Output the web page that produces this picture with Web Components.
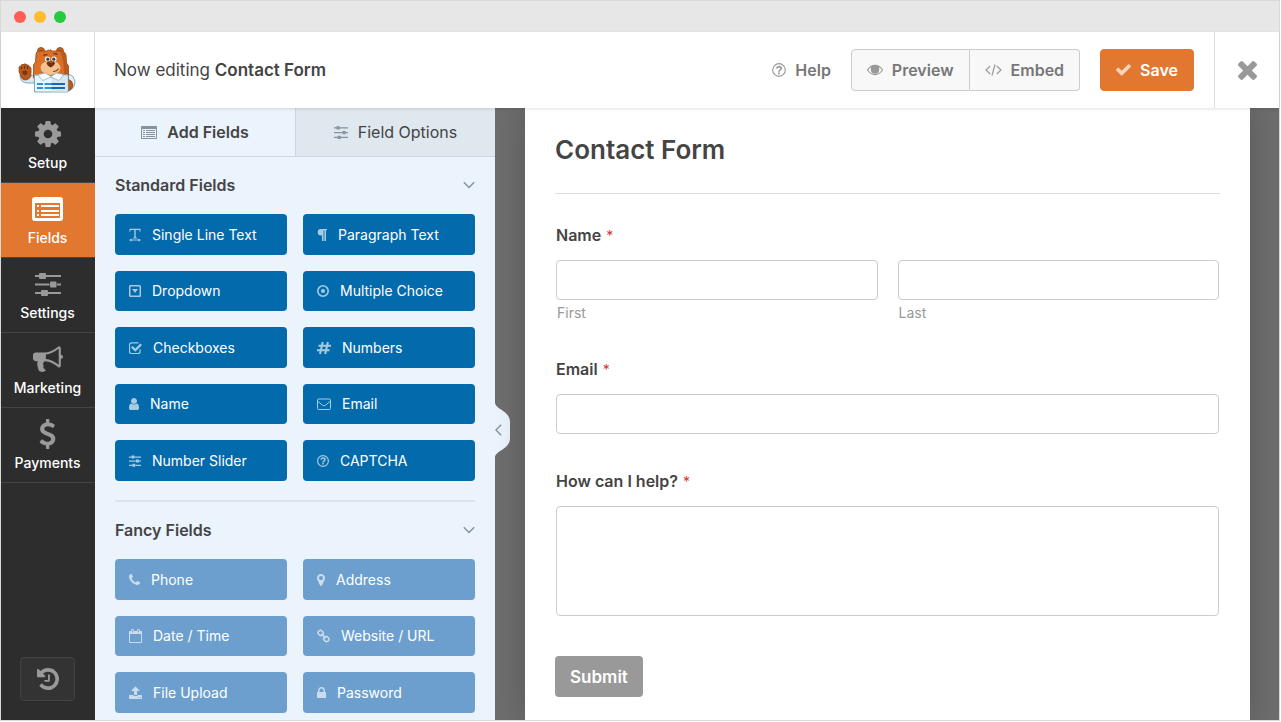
<!DOCTYPE html>
<html lang="en">
<head>
<meta charset="utf-8">
<title>Form Builder</title>
<style>
body {
  margin: 0 1px 1px 0;
  background: #ffffff;
  color: #444444;
  font-family: Inter, "Liberation Sans", sans-serif;
  font-size: 14px;
}
</style>
</head>
<body>
<builder-window>
  <builder-header slot="header" form-name="Contact Form"></builder-header>
  <side-nav slot="nav">
    <nav-item icon="cog">Setup</nav-item>
    <nav-item icon="form" active>Fields</nav-item>
    <nav-item icon="sliders-lg">Settings</nav-item>
    <nav-item icon="bullhorn">Marketing</nav-item>
    <nav-item icon="dollar">Payments</nav-item>
  </side-nav>
  <field-panel slot="panel">
    <field-group heading="Standard Fields">
      <field-button icon="text">Single Line Text</field-button>
      <field-button icon="paragraph">Paragraph Text</field-button>
      <field-button icon="dropdown">Dropdown</field-button>
      <field-button icon="radio">Multiple Choice</field-button>
      <field-button icon="checkbox">Checkboxes</field-button>
      <field-button icon="hash">Numbers</field-button>
      <field-button icon="user">Name</field-button>
      <field-button icon="envelope">Email</field-button>
      <field-button icon="sliders">Number Slider</field-button>
      <field-button icon="question">CAPTCHA</field-button>
    </field-group>
    <field-group heading="Fancy Fields">
      <field-button icon="phone" locked>Phone</field-button>
      <field-button icon="marker" locked>Address</field-button>
      <field-button icon="calendar" locked>Date / Time</field-button>
      <field-button icon="link" locked>Website / URL</field-button>
      <field-button icon="upload" locked>File Upload</field-button>
      <field-button icon="lock" locked>Password</field-button>
    </field-group>
  </field-panel>
  <form-preview heading="Contact Form">
    <form-field label="Name" type="name"></form-field>
    <form-field label="Email" type="email"></form-field>
    <form-field label="How can I help?" type="textarea"></form-field>
  </form-preview>
</builder-window>

<script>
// name: [width, height, viewBox, markup]
const icons = {
  cog: [26, 26, '128 128 1536 1536', '<path d="M1152 896q0-106-75-181t-181-75-181 75-75 181 75 181 181 75 181-75 75-181zm512-109v222q0 12-8 23t-20 13l-185 28q-19 54-39 91 35 50 107 138 10 12 10 25t-9 23q-27 37-99 108t-94 71q-12 0-26-9l-138-108q-44 23-91 38-16 136-29 186-7 28-36 28h-222q-14 0-24.5-8.5t-11.5-21.5l-28-184q-49-16-90-37l-141 107q-10 9-25 9-14 0-25-11-126-114-165-168-7-10-7-23 0-12 8-23 15-21 51-66.5t54-70.5q-27-50-41-99l-183-27q-13-2-21-12.5t-8-23.5v-222q0-12 8-23t19-13l186-28q14-46 39-92-40-57-107-138-10-12-10-24 0-10 9-23 26-36 98.5-107.5t94.5-71.5q13 0 26 10l138 107q44-23 91-38 16-136 29-186 7-28 36-28h222q14 0 24.5 8.5t11.5 21.5l28 184q49 16 90 37l142-107q9-9 24-9 13 0 25 10 129 119 165 170 7 8 7 22 0 12-8 23-15 21-51 66.5t-54 70.5q26 50 41 98l183 28q13 2 21 12.5t8 23.5z"/>'],
  form: [31, 24, '0 0 31 24', '<path fill-rule="evenodd" d="M3 0h25a3 3 0 0 1 3 3v18a3 3 0 0 1-3 3H3a3 3 0 0 1-3-3V3a3 3 0 0 1 3-3zM3 6v14a1 1 0 0 0 1 1h23a1 1 0 0 0 1-1V6z"/><path d="M5 8h2v2H5zM5 13h2v2H5zM5 17h2v2H5zM9 8h18v2H9zM9 13h18v2H9zM9 17h18v2H9z"/>'],
  'form-sm': [16, 13, '0 0 16 13', '<path fill-rule="evenodd" d="M1 0h14a1 1 0 0 1 1 1v11a1 1 0 0 1-1 1H1a1 1 0 0 1-1-1V1a1 1 0 0 1 1-1zM1 3v9h14V3z"/><path d="M2 4h2v1H2zM2 6h2v1H2zM2 8h2v1H2zM2 10h2v1H2zM5 4h9v1H5zM5 6h9v1H5zM5 8h9v1H5zM5 10h9v1H5z"/>'],
  'sliders-lg': [26, 24, '0 0 26 24', '<path d="M0 3h4v2H0zM11 3h15v2H11zM0 11.5h14.5v2H0zM22 11.5h4v2h-4zM0 20h6v2H0zM13 20h13v2H13z"/><rect x="4" y="1" width="7" height="6" rx="1"/><rect x="15" y="9.5" width="6.500" height="6" rx="1"/><rect x="6" y="18" width="7" height="6" rx="1"/>'],
  'sliders-md': [14, 13, '0 0 14 13', '<path d="M0 1.300h3v1.200H0zM6 1.300h8v1.200H6zM0 6h8v1.200H0zM12 6h2v1.200h-2zM0 10.800h3.500v1.200H0zM7 10.800h7v1.200H7z"/><path d="M2.500.300h3.300v3.200H2.500zM8.400 5h3.300v3.200H8.400zM3.500 9.800h3.300V13H3.500z"/>'],
  sliders: [12, 14, '0 0 12 14', '<path d="M0 2.500h2.500v1.200H0zM5.500 2.500H12v1.200H5.500zM0 6.500h6.800v1.200H0zM10.200 6.500H12v1.200h-1.800zM0 10.700h3v1.200H0zM6.500 10.700H12v1.200H6.500z"/><path d="M2.500 1.600h3v3h-3zM7 5.600h3v3H7zM3.300 9.800h3v3h-3z"/>'],
  bullhorn: [30, 26, '0 128 1792 1536', '<path d="M1664 640q53 0 90.500 37.500t37.500 90.500-37.500 90.500-90.500 37.500v384q0 52-38 90t-90 38q-417-347-812-380-58 19-91 66t-31 100.500 40 92.500q-20 33-23 65.500t6 58 33.500 55 48 50 61.500 50.500q-29 58-111.500 83t-168.500 11.500-132-55.500q-7-23-29.500-87.500t-32-94.500-23-89-15-101 3.500-98.500 22-110.500h-122q-66 0-113-47t-47-113v-192q0-66 47-113t113-47h480q435 0 896-384 52 0 90 38t38 90v384zm-128 604v-954q-394 302-768 343v270q377 42 768 341z"/>'],
  dollar: [17, 30, '390 0 1010 1792', '<path d="M1362 1185q0 153-99.500 263.500t-258.500 136.500v175q0 14-9 23t-23 9h-135q-13 0-22.500-9.500t-9.500-22.500v-175q-66-9-127.500-31t-101.500-44.500-74-48-46.500-37.500-17.500-18q-17-21-2-41l103-135q7-10 23-12 15-2 24 9l2 2q113 99 243 125 37 8 74 8 81 0 142.500-43t61.500-122q0-28-15-53t-33.500-42-58.500-37.500-66-32-80-32.500q-39-16-61.500-25t-61.500-26.500-62.500-31-56.500-35.500-53.500-42.500-43.500-49-35.500-58-21-66.500-8.500-78q0-138 98-242t255-134v-180q0-13 9.500-22.500t22.500-9.500h135q14 0 23 9t9 23v176q57 6 110.500 23t87 33.500 63.500 37.500 39 29 15 14q17 18 5 38l-81 146q-8 15-23 16-14 3-27-7-3-3-14.500-12t-39-26.500-58.500-32-74.500-26-85.500-11.500q-95 0-155 43t-60 111q0 26 8.500 48t29.500 41.500 39.500 33 56 31 60.500 27 70 27.500q53 20 81 31.500t76 35 75.500 42.500 62 50 53 63.500 31.500 76.500 13 94z"/>'],
  history: [22, 22, '128 128 1536 1536', '<path d="M1664 896q0 156-61 298t-164 245-245 164-298 61q-172 0-327-72.500t-264-204.500q-7-10-6.500-22.500t8.500-20.500l137-138q10-9 25-9 16 2 23 12 73 95 179 147t225 52q104 0 198.500-40.500t163.500-109.500 109.500-163.500 40.500-198.500-40.500-198.500-109.500-163.500-163.500-109.500-198.500-40.500q-98 0-188 35.500t-160 101.500l137 138q31 30 14 69-17 40-59 40h-448q-26 0-45-19t-19-45v-448q0-42 40-59 39-17 69 14l130 129q107-101 244.500-156.500t284.500-55.500q156 0 298 61t245 164 164 245 61 298zm-640-288v448q0 14-9 23t-23 9h-320q-14 0-23-9t-9-23v-64q0-14 9-23t23-9h224v-352q0-14 9-23t23-9h64q14 0 23 9t9 23z"/>'],
  eye: [16, 12, '0 0 16 12', '<path fill-rule="evenodd" d="M8 .800c3.200 0 6 1.900 7.800 4.600a1.100 1.100 0 0 1 0 1.200C14 9.300 11.200 11.200 8 11.200S2 9.300.200 6.600a1.100 1.100 0 0 1 0-1.200C2 2.700 4.800.800 8 .800zM4.300 3.100A9 9 0 0 0 1.200 6c1.600 2.400 4 4.100 6.800 4.100s5.200-1.700 6.800-4.100a9 9 0 0 0-3.100-2.900 4.200 4.200 0 1 1-7.400 0z"/><path fill-rule="evenodd" d="M8 1.700a4 4 0 1 1 0 8 4 4 0 0 1 0-8zM8 3a2.700 2.700 0 0 0-2.700 2.700h.800A1.900 1.900 0 0 1 8 3.800z"/>'],
  code: [17, 12, '0 0 17 12', '<path fill="none" stroke="currentColor" stroke-width="1.200" d="M5.200 2L1 6l4.200 4M11.800 2L16 6l-4.200 4M10 .500l-3 11"/>'],
  check: [15, 12, '120 360 1555 1165', '<path d="M1671 566q0 40-28 68l-724 724-136 136q-28 28-68 28t-68-28l-136-136-362-362q-28-28-28-68t28-68l136-136q28-28 68-28t68 28l294 295 656-657q28-28 68-28t68 28l136 136q28 28 28 68z"/>'],
  times: [19, 19, '302 366 1188 1188', '<path d="M1490 1322q0 40-28 68l-136 136q-28 28-68 28t-68-28l-294-294-294 294q-28 28-68 28t-68-28l-136-136q-28-28-28-68t28-68l294-294-294-294q-28-28-28-68t28-68l136-136q28-28 68-28t68 28l294 294 294-294q28-28 68-28t68 28l136 136q28 28 28 68t-28 68l-294 294 294 294q28 28 28 68z"/>'],
  question: [12, 14, '0 0 12 14', '<circle cx="6" cy="7" r="5.400" fill="none" stroke="currentColor" stroke-width="1.200"/><path fill="none" stroke="currentColor" stroke-width="1.500" d="M4 5.700C4.200 4.600 5 4.100 6 4.100c1.100 0 2 .700 2 1.600C8 6.900 6 6.900 6 8.400"/><path d="M5.200 9.100h1.600v1.500H5.200z"/>'],
  'question-lg': [14, 14, '0 1 12 12', '<circle cx="6" cy="7" r="5.400" fill="none" stroke="currentColor" stroke-width="1"/><path fill="none" stroke="currentColor" stroke-width="1.400" d="M4 5.700C4.200 4.600 5 4.100 6 4.100c1.100 0 2 .700 2 1.600C8 6.900 6 6.900 6 8.400"/><path d="M5.200 9.100h1.600v1.500H5.200z"/>'],
  chevron: [12, 8, '0 0 12 8', '<path fill="none" stroke="currentColor" stroke-width="1.400" d="M.800 1.200L6 6.500l5.200-5.300"/>'],
  'chevron-left': [7, 12, '0 0 7 12', '<path fill="none" stroke="currentColor" stroke-width="1.400" d="M6.200.800L1 6l5.200 5.200"/>'],
  text: [12, 14, '0 0 12 14', '<path d="M.500.800h11v3h-.700L10.300 2H6.700v7.500l1.500.300v.700H3.800v-.700l1.500-.300V2H1.700l-.500 1.800H.500zM0 12l2.500-1.500v1h7v-1L12 12l-2.500 1.700v-1.100h-7v1.100z"/>'],
  paragraph: [10, 14, '0 0 10 14', '<path d="M4 1h6v1.300H9V13H7.400V2.300H6.600V13H5V7.600H4A3.300 3.300 0 0 1 4 1z"/>'],
  dropdown: [12, 14, '0 0 12 14', '<path fill-rule="evenodd" d="M1.500 1h9A1.500 1.500 0 0 1 12 2.500v9a1.500 1.500 0 0 1-1.500 1.500h-9A1.500 1.500 0 0 1 0 11.500v-9A1.500 1.500 0 0 1 1.500 1zm0 1.500v9h9v-9z"/><path d="M3 5h6L6 9z"/>'],
  radio: [12, 14, '0 0 12 14', '<circle cx="6" cy="7" r="5.200" fill="none" stroke="currentColor" stroke-width="1.600"/><circle cx="6" cy="7" r="2"/>'],
  checkbox: [13, 14, '0 0 13 14', '<path fill="none" stroke="currentColor" stroke-width="1.200" d="M9.500 1.900h-7a2 2 0 0 0-2 2v6.600a2 2 0 0 0 2 2h6.600a2 2 0 0 0 2-2V8.300"/><path d="M2 6.500l1.600-1.600 2.700 2.500 5-5L13 4 6.300 10.700z"/>'],
  hash: [14, 14, '0 0 14 14', '<path fill="none" stroke="currentColor" stroke-width="2" d="M5.700 1L3 13M10.900 1L8.200 13M1.500 4.800H14M0 9.200h12.500"/>'],
  user: [10, 14, '256 0 1280 1792', '<path d="M1536 1399q0 109-62.500 187t-150.500 78h-854q-88 0-150.500-78t-62.500-187q0-85 8.500-160.500t31.500-152 58.500-131 94-89 134.500-34.500q131 128 313 128t313-128q76 0 134.500 34.500t94 89 58.500 131 31.500 152 8.500 160.500zm-256-887q0 159-112.500 271.500t-271.500 112.500-271.500-112.500-112.500-271.500 112.500-271.500 271.500-112.500 271.500 112.500 112.500 271.500z"/>'],
  envelope: [14, 14, '0 0 14 14', '<rect x=".500" y="2" width="13" height="10.500" rx="1" fill="none" stroke="currentColor"/><path fill="none" stroke="currentColor" d="M.700 4.200l4.800 4q1.500 1.200 3 0l4.800-4"/>'],
  phone: [11, 14, '192 0 1408 1792', '<path d="M1600 1240q0 27-10 70.500t-21 68.500q-21 50-122 106-94 51-186 51-27 0-53-3.500t-57.500-12.500-47-14.500-55.500-20.500-49-18q-98-35-175-83-127-79-264-216t-216-264q-48-77-83-175-3-9-18-49t-20.500-55.500-14.500-47-12.500-57.500-3.500-53q0-92 51-186 56-101 106-122 25-11 68.500-21t70.500-10q14 0 21 3 18 6 53 76 11 19 30 54t35 63.500 31 53.500q3 4 17.500 25t21.500 35.500 7 28.500q0 20-28.500 50t-62 55-62 53-28.500 46q0 9 5 22.500t8.500 20.500 14 24 11.500 19q76 137 174 235t235 174q2 1 19 11.500t24 14 20.500 8.500 22.500 5q18 0 46-28.500t53-62 55-62 50-28.500q14 0 28.500 7t35.500 21.500 25 17.500q25 15 53.500 31t63.500 35 54 30q70 35 76 53 3 7 3 21z"/>'],
  marker: [8, 14, '384 0 1024 1792', '<path d="M1152 640q0-106-75-181t-181-75-181 75-75 181 75 181 181 75 181-75 75-181zm256 0q0 109-33 179l-364 774q-16 33-47.500 52t-67.500 19-67.500-19-46.500-52l-365-774q-33-70-33-179 0-212 150-362t362-150 362 150 150 362z"/>'],
  calendar: [13, 14, '0 0 13 14', '<path fill-rule="evenodd" d="M1 2h1.200V1a1 1 0 0 1 1-1h.600a1 1 0 0 1 1 1v1h3.400V1a1 1 0 0 1 1-1h.600a1 1 0 0 1 1 1v1H12a1 1 0 0 1 1 1v10a1 1 0 0 1-1 1H1a1 1 0 0 1-1-1V3a1 1 0 0 1 1-1zm0 3v8h11V5zM3.100 1v2.600h.800V1zM9.100 1v2.600h.800V1z"/>'],
  link: [13, 14, '0 0 13 14', '<g fill="none" stroke="currentColor" stroke-width="1.500"><rect x="1.100" y="1.700" width="5.200" height="4.600" rx="2" transform="rotate(45 3.700 4)"/><rect x="6.700" y="7.700" width="5.200" height="4.600" rx="2" transform="rotate(45 9.300 10)"/><path d="M4.300 4.700l4.500 4.500"/></g>'],
  upload: [13, 14, '64 0 1664 1792', '<path d="M1344 1472q0-26-19-45t-45-19-45 19-19 45 19 45 45 19 45-19 19-45zm256 0q0-26-19-45t-45-19-45 19-19 45 19 45 45 19 45-19 19-45zm128-224v320q0 40-28 68t-68 28h-1472q-40 0-68-28t-28-68v-320q0-40 28-68t68-28h427q21 56 70.500 92t110.500 36h256q61 0 110.500-36t70.500-92h427q40 0 68 28t28 68zm-325-648q-17 40-59 40h-256v448q0 26-19 45t-45 19h-256q-26 0-45-19t-19-45v-448h-256q-42 0-59-40-17-39 14-69l448-448q18-19 45-19t45 19l448 448q31 30 14 69z"/>'],
  lock: [9, 14, '320 0 1152 1792', '<path d="M640 768h512v-192q0-106-75-181t-181-75-181 75-75 181v192zm832 96v576q0 40-28 68t-68 28h-960q-40 0-68-28t-28-68v-576q0-40 28-68t68-28h32v-192q0-184 132-316t316-132 316 132 132 316v192h32q40 0 68 28t28 68z"/>']
};

class UiIcon extends HTMLElement {
  connectedCallback() {
    const [width, height, viewBox, markup] = icons[this.getAttribute('name')];
    this.attachShadow({ mode: 'open' });
    this.shadowRoot.innerHTML = `
      <style>
        :host { display: block; flex: none; }
        svg { display: block; fill: currentColor; }
      </style>
      <svg width="${width}" height="${height}" viewBox="${viewBox}" aria-hidden="true">${markup}</svg>
    `;
  }
}

class BearLogo extends HTMLElement {
  connectedCallback() {
    this.attachShadow({ mode: 'open' });
    this.shadowRoot.innerHTML = `
      <style>
        :host { display: block; }
        svg { display: block; }
      </style>
      <svg width="58" height="48" viewBox="18 46 58 48" role="img" aria-label="Bear mascot">
        <path d="M20 75q0 8 8 8h6l1-8-6 1z" fill="#d9eaf3" stroke="#7ea9bc"/>
        <path d="M67 74q8 1 8 9 0 5-6 8l-2-1z" fill="#e5f1f6" stroke="#7ea9bc"/>
        <path d="M68 79q5 2 5 6t-5 6z" fill="#b85a1c" stroke="#8a3e12" stroke-width=".600"/>
        <path d="M19 68q0-2 2-2 0-2 2.200-1.500Q25.500 63 27 65q2-.500 2.300 1.500 2.200.500 1.700 3v4q0 6-6 6.500-4-.500-4.500-5Q18.500 72 19 68z" fill="#b85a1c" stroke="#8a3e12" stroke-width=".800"/>
        <path d="M21.500 67v2M24.500 66v2.500M27.500 66.500v2.500" stroke="#6f300e" stroke-width="1.200"/>
        <path d="M22 71.500q3-2 5.500 0 .500 3-2.800 4-2.700-1-2.700-4z" fill="#7d3710"/>
        <circle cx="41" cy="51" r="3.500" fill="#c8641f" stroke="#8a3e12" stroke-width=".800"/>
        <circle cx="60" cy="51" r="3.500" fill="#c8641f" stroke="#8a3e12" stroke-width=".800"/>
        <circle cx="41" cy="51.500" r="1.600" fill="#7d3710"/>
        <circle cx="60" cy="51.500" r="1.600" fill="#7d3710"/>
        <path d="M36 54q0-3 4-3h7l1.500-1.200.8 1 1.500-1.200.7 1.400h8.500q5 0 6 4l.5 8 2 3v13q-7 3-17 3t-18-4V65l2-3z" fill="#d87029" stroke="#9a4614" stroke-width=".800"/>
        <path d="M60 51q5 0 6 4l.5 8 2 3v11l-5 2q2-14-3.500-28z" fill="#b85a1c"/>
        <path d="M43.500 55.500q2-1.500 4-.5M53.500 54q2.500-.800 4 .700" fill="none" stroke="#6f300e" stroke-width="1.200"/>
        <circle cx="47.500" cy="59" r="2.600" fill="#fff"/>
        <circle cx="54" cy="59" r="2.600" fill="#fff"/>
        <circle cx="47.800" cy="59.200" r="1.600" fill="#24445c"/>
        <circle cx="53.800" cy="59.200" r="1.600" fill="#24445c"/>
        <path d="M44.500 62q-4 2-4 6 1 6 10 7 9-1 10-7-.500-4-4-6z" fill="#f5c18d"/>
        <path d="M47.500 61.500h6.500l1 2q-2 3.500-4.300 4-2.500-.500-4.200-4z" fill="#6f300e"/>
        <path d="M49.500 62.500h3" stroke="#a7673f" stroke-width=".800"/>
        <path d="M53 71.500q4 0 5.500-3" fill="none" stroke="#85451b" stroke-width="1.200"/>
        <path d="M34.500 75q8-1 17 2 8-3 16.500-2v17H34.500z" fill="#ecf6fa" stroke="#7ea9bc"/>
        <path d="M51.500 77.500l16-2v16h-16z" fill="#d5e8f0"/>
        <path d="M38 74.500q2 4 5 6l8-3.500 7.500 3.500q3-2 5-6l-7-1.500-5.500 3.500-5.500-3.500z" fill="#f7fcff" stroke="#7ea9bc" stroke-width=".700"/>
        <path d="M37 84h6M37 88h6M44.500 84h8M44.500 88h8" stroke="#2794df" stroke-width="2"/>
        <path d="M51.500 84H65M51.500 88H65" stroke="#1768b0" stroke-width="2"/>
      </svg>
    `;
  }
}

class BuilderWindow extends HTMLElement {
  connectedCallback() {
    this.attachShadow({ mode: 'open' });
    this.shadowRoot.innerHTML = `
      <style>
        :host {
          display: flex;
          flex-direction: column;
          box-sizing: border-box;
          min-height: calc(100vh - 1px);
          border: 1px solid #d9d9d9;
        }
        .title-bar {
          display: flex;
          align-items: center;
          gap: 8px;
          box-sizing: border-box;
          height: 31px;
          padding: 0 13px;
          background: #e7e7e7;
        }
        .dot {
          width: 12px;
          height: 12px;
          border-radius: 50%;
          background: #ff5f57;
        }
        .dot.minimize { background: #febc2e; }
        .dot.maximize { background: #28c840; }
        .workspace {
          flex: 1;
          display: grid;
          grid-template-columns: 94px 400px 1fr;
        }
      </style>
      <div class="title-bar">
        <span class="dot"></span>
        <span class="dot minimize"></span>
        <span class="dot maximize"></span>
      </div>
      <slot name="header"></slot>
      <div class="workspace">
        <slot name="nav"></slot>
        <slot name="panel"></slot>
        <slot></slot>
      </div>
    `;
  }
}

class BuilderHeader extends HTMLElement {
  connectedCallback() {
    this.attachShadow({ mode: 'open' });
    this.shadowRoot.innerHTML = `
      <style>
        :host {
          display: flex;
          align-items: stretch;
          height: 76px;
          background: #ffffff;
          box-shadow: 0 1px 3px rgba(0, 0, 0, 0.12);
          position: relative;
          z-index: 1;
        }
        .logo {
          display: flex;
          align-items: center;
          justify-content: center;
          box-sizing: border-box;
          width: 94px;
          padding-right: 2px;
          border-right: 1px solid #dddddd;
        }
        h1 {
          flex: 1;
          align-self: center;
          margin: 0;
          padding-left: 19px;
          font-size: 17px;
          line-height: 24px;
          font-weight: 400;
        }
        strong { font-weight: 600; }
        .actions {
          display: flex;
          align-items: center;
          gap: 20px;
          padding-right: 20px;
        }
        a, button {
          display: flex;
          align-items: center;
          gap: 9px;
          box-sizing: border-box;
          font: 600 16px/20px Inter, "Liberation Sans", sans-serif;
          color: #777777;
          text-decoration: none;
          cursor: pointer;
        }
        a ui-icon, .group ui-icon { color: #999999; }
        button {
          height: 42px;
          padding: 0 15px;
          border: 1px solid #cccccc;
          background: #f8f8f8;
        }
        .group { display: flex; }
        .group button:first-child { border-radius: 4px 0 0 4px; }
        .group button:last-child {
          border-left: 0;
          border-radius: 0 4px 4px 0;
        }
        .save {
          border-color: #e27730;
          border-radius: 4px;
          background: #e27730;
          color: #ffffff;
        }
        .save ui-icon { color: #f7d5bd; }
        .close {
          justify-content: center;
          width: 65px;
          height: auto;
          border: 0;
          border-left: 1px solid #dddddd;
          background: none;
          color: #999999;
        }
      </style>
      <div class="logo"><bear-logo></bear-logo></div>
      <h1>Now editing <strong>${this.getAttribute('form-name')}</strong></h1>
      <div class="actions">
        <a href="#help"><ui-icon name="question-lg"></ui-icon>Help</a>
        <div class="group">
          <button type="button"><ui-icon name="eye"></ui-icon>Preview</button>
          <button type="button"><ui-icon name="code"></ui-icon>Embed</button>
        </div>
        <button type="button" class="save"><ui-icon name="check"></ui-icon>Save</button>
      </div>
      <button type="button" class="close" aria-label="Close"><ui-icon name="times"></ui-icon></button>
    `;
  }
}

class SideNav extends HTMLElement {
  connectedCallback() {
    this.attachShadow({ mode: 'open' });
    this.shadowRoot.innerHTML = `
      <style>
        :host {
          display: flex;
          flex-direction: column;
          background: #2d2d2d;
        }
        nav { flex: 1; }
        .history {
          display: flex;
          align-items: center;
          justify-content: center;
          width: 55px;
          height: 44px;
          margin: 0 0 19px 19px;
          border: 1px solid #444444;
          border-radius: 4px;
          background: #333333;
          color: #999999;
        }
      </style>
      <nav><slot></slot></nav>
      <button type="button" class="history" aria-label="Revisions"><ui-icon name="history"></ui-icon></button>
    `;
  }
}

class NavItem extends HTMLElement {
  connectedCallback() {
    this.attachShadow({ mode: 'open' });
    this.shadowRoot.innerHTML = `
      <style>
        :host {
          display: block;
          border-bottom: 1px solid #444444;
          color: #999999;
        }
        :host([active]) {
          background: #e27730;
          color: #ffffff;
        }
        button {
          display: flex;
          flex-direction: column;
          align-items: center;
          width: 100%;
          height: 74px;
          padding: 10px 1px 0 0;
          border: 0;
          background: none;
          color: inherit;
          font: 500 14px/20px Inter, "Liberation Sans", sans-serif;
        }
        .icon {
          display: grid;
          place-items: center;
          height: 32px;
          margin-bottom: 3px;
        }
        .label { color: #ffffff; }
      </style>
      <button type="button">
        <span class="icon"><ui-icon name="${this.getAttribute('icon')}"></ui-icon></span>
        <span class="label"><slot></slot></span>
      </button>
    `;
  }
}

class FieldPanel extends HTMLElement {
  connectedCallback() {
    this.attachShadow({ mode: 'open' });
    this.shadowRoot.innerHTML = `
      <style>
        :host {
          display: block;
          position: relative;
          background: #ebf3fc;
        }
        .tabs {
          display: grid;
          grid-template-columns: 1fr 1fr;
          border-bottom: 1px solid #ced7e0;
        }
        .tabs button {
          display: flex;
          align-items: center;
          justify-content: center;
          gap: 10px;
          height: 48px;
          padding: 0;
          border: 0;
          background: none;
          font: 400 16px/20px Inter, "Liberation Sans", sans-serif;
          color: #444444;
        }
        .tabs .active { font-weight: 600; }
        .tabs button:last-child {
          border-left: 1px solid #ced7e0;
          background: #dfe7ef;
        }
        .tabs ui-icon { color: #86919e; }
        .groups { padding: 0 20px 7px; }
        /* handle that hangs over the preview area */
        .collapse {
          position: absolute;
          top: 292px;
          left: 100%;
          width: 15px;
          height: 60px;
          padding: 0;
          border: 0;
          background: none;
          color: #86919e;
        }
        .collapse svg {
          display: block;
          fill: #ebf3fc;
        }
        .collapse ui-icon {
          position: absolute;
          top: 24px;
          left: 0;
        }
      </style>
      <div class="tabs" role="tablist">
        <button type="button" role="tab" aria-selected="true" class="active"><ui-icon name="form-sm"></ui-icon>Add Fields</button>
        <button type="button" role="tab" aria-selected="false"><ui-icon name="sliders-md"></ui-icon>Field Options</button>
      </div>
      <div class="groups"><slot></slot></div>
      <button type="button" class="collapse" aria-label="Collapse panel">
        <svg width="15" height="60" viewBox="0 0 15 60"><path d="M0 2C0 10 15 10 15 22V38C15 50 0 50 0 58z"/></svg>
        <ui-icon name="chevron-left"></ui-icon>
      </button>
    `;
  }
}

class FieldGroup extends HTMLElement {
  connectedCallback() {
    this.attachShadow({ mode: 'open' });
    this.shadowRoot.innerHTML = `
      <style>
        :host {
          display: block;
          padding: 18px 0 19px;
          border-bottom: 2px solid #dce4ed;
        }
        :host(:last-of-type) {
          padding-bottom: 0;
          border-bottom: 0;
        }
        h2 {
          display: flex;
          align-items: center;
          justify-content: space-between;
          margin: 0 0 19px;
          font-size: 16px;
          line-height: 20px;
          font-weight: 600;
        }
        h2 ui-icon { color: #86919e; }
        .grid {
          display: grid;
          grid-template-columns: 1fr 1fr;
          grid-auto-rows: 41px 40px;
          gap: 16px;
        }
      </style>
      <h2>${this.getAttribute('heading')}<ui-icon name="chevron"></ui-icon></h2>
      <div class="grid"><slot></slot></div>
    `;
  }
}

class FieldButton extends HTMLElement {
  connectedCallback() {
    this.attachShadow({ mode: 'open' });
    this.shadowRoot.innerHTML = `
      <style>
        :host { display: grid; }
        button {
          display: flex;
          align-items: center;
          gap: 11px;
          padding: 0 14px;
          border: 0;
          border-radius: 4px;
          background: #036aab;
          color: #ffffff;
          font: 400 14px/20px Inter, "Liberation Sans", sans-serif;
        }
        :host([locked]) button { background: #6c9fce; }
        ui-icon { opacity: 0.65; }
      </style>
      <button type="button"><ui-icon name="${this.getAttribute('icon')}"></ui-icon><slot></slot></button>
    `;
  }
}

class FormPreview extends HTMLElement {
  connectedCallback() {
    this.attachShadow({ mode: 'open' });
    this.shadowRoot.innerHTML = `
      <style>
        :host {
          display: grid;
          padding: 0 29px 0 30px;
          background: #6d6d6d;
        }
        .card {
          padding: 24px 30px 20px;
          background: #ffffff;
          box-shadow: 0 0 30px rgba(0, 0, 0, 0.2);
          clip-path: inset(0 -30px);
        }
        h2 {
          margin: 0;
          padding-bottom: 25px;
          border-bottom: 1px solid #dddddd;
          font-size: 26px;
          line-height: 36px;
          font-weight: 600;
        }
        .fields {
          display: grid;
          gap: 35px;
          padding: 29px 1px 40px;
        }
        .submit {
          height: 41px;
          padding: 0 15px;
          border: 0;
          border-radius: 4px;
          background: #999999;
          color: #ffffff;
          font: 600 17px/24px Inter, "Liberation Sans", sans-serif;
        }
      </style>
      <div class="card">
        <h2>${this.getAttribute('heading')}</h2>
        <div class="fields"><slot></slot></div>
        <button type="button" class="submit">Submit</button>
      </div>
    `;
  }
}

class FormField extends HTMLElement {
  connectedCallback() {
    this.attachShadow({ mode: 'open' });
    this.shadowRoot.innerHTML = `
      <style>
        :host { display: block; }
        .label {
          display: block;
          margin-bottom: 13px;
          font-size: 16px;
          line-height: 24px;
          font-weight: 600;
        }
        .required {
          margin-left: 5px;
          color: #d63637;
          font-size: 14px;
          line-height: 14px;
          font-weight: 400;
        }
        input, textarea {
          display: block;
          box-sizing: border-box;
          width: 100%;
          height: 40px;
          margin: 0;
          padding: 8px;
          border: 1px solid #cccccc;
          border-radius: 4px;
          background: #ffffff;
          font: inherit;
          resize: none;
        }
        textarea { height: 110px; }
        .columns {
          display: grid;
          grid-template-columns: 1fr 1fr;
          gap: 20px;
        }
        .sublabel {
          display: block;
          margin: 4px 1px 0;
          color: #999999;
          font-size: 14px;
          line-height: 18px;
        }
      </style>
      <label class="label" for="control">${this.getAttribute('label')}<span class="required">*</span></label>
      ${this.controls()}
    `;
  }

  controls() {
    const type = this.getAttribute('type');
    if (type === 'textarea') {
      return '<textarea id="control"></textarea>';
    }
    if (type === 'name') {
      return `
        <div class="columns">
          <div><input id="control" type="text"><label class="sublabel" for="control">First</label></div>
          <div><input id="last" type="text"><label class="sublabel" for="last">Last</label></div>
        </div>
      `;
    }
    return `<input id="control" type="${type}">`;
  }
}

customElements.define('ui-icon', UiIcon);
customElements.define('bear-logo', BearLogo);
customElements.define('builder-window', BuilderWindow);
customElements.define('builder-header', BuilderHeader);
customElements.define('side-nav', SideNav);
customElements.define('nav-item', NavItem);
customElements.define('field-panel', FieldPanel);
customElements.define('field-group', FieldGroup);
customElements.define('field-button', FieldButton);
customElements.define('form-preview', FormPreview);
customElements.define('form-field', FormField);
</script>
</body>
</html>
